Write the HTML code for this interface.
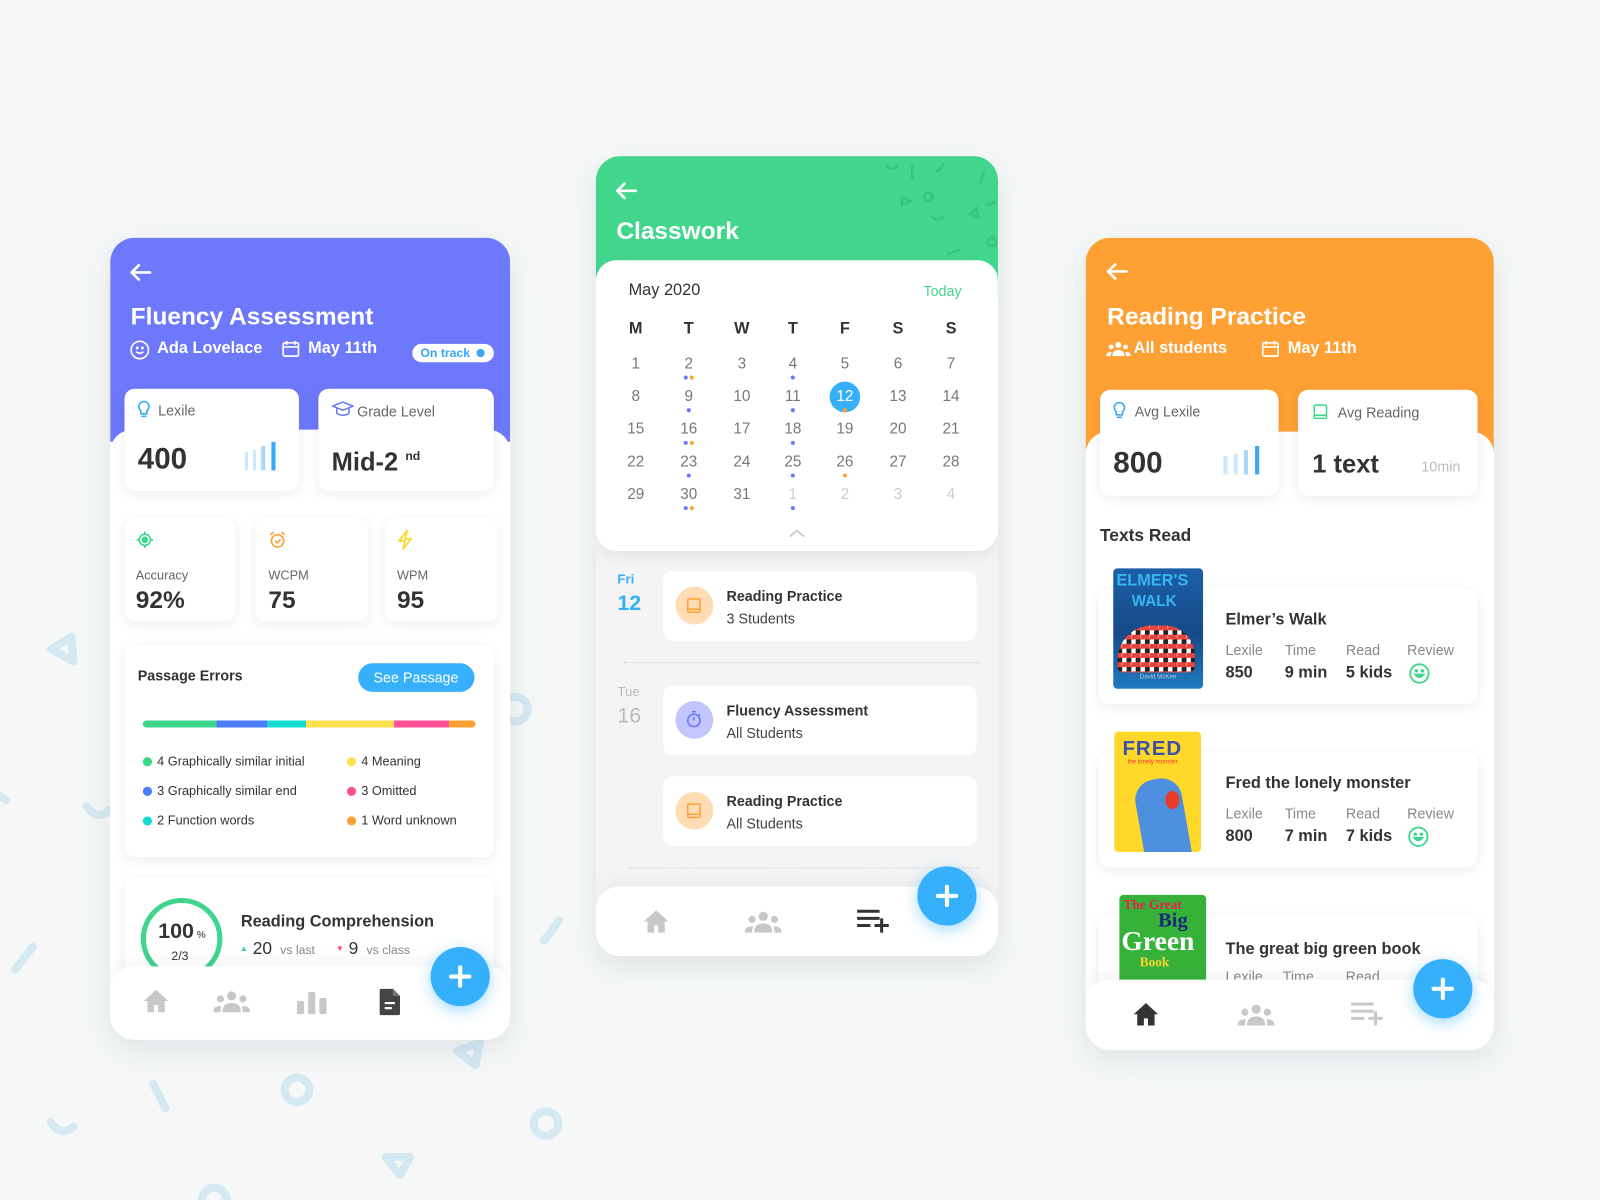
<!DOCTYPE html>
<html><head><meta charset="utf-8"><style>
*{box-sizing:border-box;margin:0;padding:0}
body{width:1600px;height:1200px;overflow:hidden;background:#f6f8f8;font-family:"Liberation Sans",sans-serif;color:#333}
#w{position:absolute;left:0;top:0;width:1568px;height:1176px;transform:scale(1.020408);transform-origin:0 0}
.a{position:absolute}
.card{position:absolute;border-radius:24px;overflow:hidden;box-shadow:0 10px 30px rgba(120,140,150,.18)}
.wc{position:absolute;background:#fff;border-radius:10px;box-shadow:0 3px 12px rgba(0,0,0,.07)}
.t{position:absolute;white-space:nowrap}
.nav{position:absolute;left:0;right:0;bottom:0;background:#fff;border-radius:22px 22px 0 0;box-shadow:0 -6px 16px rgba(0,0,0,.04)}
.fab{position:absolute;width:58px;height:58px;border-radius:50%;background:#36b0fb;box-shadow:0 4px 14px rgba(54,176,251,.45)}
.fab:before,.fab:after{content:"";position:absolute;background:#fff;border-radius:2px;left:27px;top:18px;width:4px;height:22px}
.fab:after{left:18px;top:27px;width:22px;height:4px}
.lg{font-size:12.5px;color:#333}
.dot{display:inline-block;width:9px;height:9px;border-radius:50%;margin-right:5px;vertical-align:-1px}
.cal{position:absolute;font-size:15px;color:#777;text-align:center;width:30px}
.cd{position:absolute;width:4px;height:4px;border-radius:50%}
.ttl{font-size:24px;font-weight:bold;color:#fff}
</style></head><body><div id="w">

<svg class="a" style="left:0;top:0" width="1568" height="1176" fill="none" stroke="#d5e9f3" stroke-width="8" stroke-linecap="round" stroke-linejoin="round">
<path d="M70 624 L50 636 L72 648 Z"/>
<line x1="15" y1="950" x2="32" y2="928"/>
<line x1="150" y1="1062" x2="162" y2="1086"/>
<circle cx="291" cy="1068" r="12"/>
<path d="M50 1100 Q60 1115 72 1104"/>
<path d="M85 790 Q95 805 107 794"/>
<circle cx="535" cy="1101" r="12"/>
<path d="M378 1134 L402 1134 L392 1152 Z"/>
<path d="M470 1022 L448 1030 L466 1044 Z"/>
<line x1="533" y1="922" x2="548" y2="902"/>
<circle cx="505" cy="695" r="12"/>
<circle cx="210" cy="1176" r="12"/>
<path d="M0 780 L6 784"/>
</svg>

<!-- LEFT CARD -->
<div class="card" style="left:108px;top:233px;width:392px;height:786px;background:#fff">
 <div class="a" style="left:0;top:0;width:392px;height:200px;background:#6d78fb"></div>
 <div class="a" style="left:0;top:188px;width:392px;height:600px;background:#fff;border-radius:22px 22px 0 0"></div>
 <svg class="a" style="left:18px;top:24px" width="24" height="20" fill="none" stroke="#fff" stroke-width="2.6" stroke-linecap="round" stroke-linejoin="round"><path d="M21 10H3M10 3L3 10L10 17"/></svg>
 <div class="t ttl" style="left:20px;top:64px">Fluency Assessment</div>
 <svg class="a" style="left:19px;top:100px" width="20" height="20" fill="none" stroke="#fff" stroke-width="1.6"><circle cx="10" cy="10" r="8.5"/><path d="M6.5 11.5Q10 15 13.5 11.5"/><circle cx="7.5" cy="8" r=".6" fill="#fff"/><circle cx="12.5" cy="8" r=".6" fill="#fff"/></svg>
 <div class="t" style="left:46px;top:100px;font-size:16px;color:#fff;font-weight:bold">Ada Lovelace</div>
 <svg class="a" style="left:168px;top:100px" width="18" height="18" fill="none" stroke="#fff" stroke-width="1.6"><rect x="1.5" y="3" width="15" height="13" rx="1.5"/><path d="M1.5 7h15M5 1v4M13 1v4"/></svg>
 <div class="t" style="left:194px;top:100px;font-size:16px;color:#fff;font-weight:bold">May 11th</div>
 <div class="a" style="left:296px;top:104px;width:80px;height:18px;border-radius:9px;background:#fff"><span class="t" style="left:8px;top:2px;font-size:12px;color:#36a8f5;font-weight:bold">On track</span><span class="a" style="left:63px;top:5px;width:8px;height:8px;border-radius:50%;background:#36a8f5"></span></div>

 <div class="wc" style="left:14px;top:148px;width:171px;height:100px">
  <svg class="a" style="left:12px;top:11px" width="14" height="18" fill="none" stroke="#36a8f5" stroke-width="1.6"><path d="M7 1.5a5 5 0 0 0-3 9v3h6v-3a5 5 0 0 0-3-9zM4.5 16h5"/></svg>
  <div class="t" style="left:33px;top:13px;font-size:14px;color:#666">Lexile</div>
  <div class="t" style="left:13px;top:53px;font-size:29px;font-weight:bold;color:#333">400</div>
  <div class="a" style="left:118px;top:62px;width:3px;height:18px;background:#cbe8fd"></div>
  <div class="a" style="left:126px;top:60px;width:3px;height:20px;background:#cbe8fd"></div>
  <div class="a" style="left:134px;top:56px;width:4px;height:24px;background:#a6d8fb"></div>
  <div class="a" style="left:144px;top:52px;width:4px;height:28px;background:#36a8f5"></div>
 </div>
 <div class="wc" style="left:204px;top:148px;width:172px;height:100px">
  <svg class="a" style="left:13px;top:12px" width="22" height="16" fill="none" stroke="#6d78fb" stroke-width="1.5" stroke-linejoin="round"><path d="M1 5L11 1L21 5L11 9Z M5 7v5q6 4 12 0V7"/></svg>
  <div class="t" style="left:38px;top:14px;font-size:14px;color:#666">Grade Level</div>
  <div class="t" style="left:13px;top:58px;font-size:25px;font-weight:bold;color:#333">Mid-2 <sup style="font-size:12px;vertical-align:10px">nd</sup></div>
 </div>

 <div class="wc" style="left:14px;top:275px;width:109px;height:101px">
  <svg class="a" style="left:11px;top:12px" width="18" height="18" fill="none" stroke="#3ed58c" stroke-width="1.6"><circle cx="9" cy="9" r="5.5"/><circle cx="9" cy="9" r="2.5" fill="#3ed58c"/><path d="M9 1v2.5M9 14.5V17M1 9h2.5M14.5 9H17"/></svg>
  <div class="t" style="left:11px;top:49px;font-size:12.5px;color:#666">Accuracy</div>
  <div class="t" style="left:11px;top:67px;font-size:24px;font-weight:bold;color:#333">92%</div>
 </div>
 <div class="wc" style="left:142px;top:275px;width:111px;height:101px">
  <svg class="a" style="left:13px;top:12px" width="18" height="18" fill="none" stroke="#ffa032" stroke-width="1.6"><circle cx="9" cy="10" r="6"/><path d="M6.5 10l2 2 3.5-3.5M2 4l3-2.5M16 4l-3-2.5"/></svg>
  <div class="t" style="left:13px;top:49px;font-size:12.5px;color:#666">WCPM</div>
  <div class="t" style="left:13px;top:67px;font-size:24px;font-weight:bold;color:#333">75</div>
 </div>
 <div class="wc" style="left:269px;top:275px;width:111px;height:101px">
  <svg class="a" style="left:12px;top:11px" width="16" height="20" fill="none" stroke="#ffd633" stroke-width="1.8" stroke-linejoin="round"><path d="M10 1L2 11h6l-2 8 8-10H8z"/></svg>
  <div class="t" style="left:12px;top:49px;font-size:12.5px;color:#666">WPM</div>
  <div class="t" style="left:12px;top:67px;font-size:24px;font-weight:bold;color:#333">95</div>
 </div>

 <div class="wc" style="left:14px;top:399px;width:362px;height:208px">
  <div class="t" style="left:13px;top:22px;font-size:14px;font-weight:bold;color:#333">Passage Errors</div>
  <div class="a" style="left:229px;top:18px;width:114px;height:28px;border-radius:14px;background:#36b0fb"><span class="t" style="left:15px;top:6px;font-size:14px;color:#fff">See Passage</span></div>
  <div class="a" style="left:18px;top:74px;width:326px;height:7px;border-radius:4px;overflow:hidden;display:flex">
   <span style="width:72px;background:#3ed58c"></span><span style="width:50px;background:#4a7cfb"></span><span style="width:38px;background:#13dbcf"></span><span style="width:86px;background:#ffe04f"></span><span style="width:54px;background:#ff4f96"></span><span style="flex:1;background:#ffa032"></span>
  </div>
  <div class="t lg" style="left:18px;top:107px"><span class="dot" style="background:#3ed58c"></span>4 Graphically similar initial</div>
  <div class="t lg" style="left:18px;top:136px"><span class="dot" style="background:#4a7cfb"></span>3 Graphically similar end</div>
  <div class="t lg" style="left:18px;top:165px"><span class="dot" style="background:#13dbcf"></span>2 Function words</div>
  <div class="t lg" style="left:218px;top:107px"><span class="dot" style="background:#ffe04f"></span>4 Meaning</div>
  <div class="t lg" style="left:218px;top:136px"><span class="dot" style="background:#ff4f96"></span>3 Omitted</div>
  <div class="t lg" style="left:218px;top:165px"><span class="dot" style="background:#ffa032"></span>1 Word unknown</div>
 </div>

 <div class="wc" style="left:14px;top:627px;width:362px;height:120px">
  <div class="a" style="left:16px;top:20px;width:80px;height:80px;border-radius:50%;border:5px solid #3ed58c"></div>
  <div class="t" style="left:33px;top:41px;font-size:21px;font-weight:bold;color:#333">100<span style="font-size:10px;color:#666"> %</span></div>
  <div class="t" style="left:46px;top:70px;font-size:12px;color:#333">2/3</div>
  <div class="t" style="left:114px;top:35px;font-size:16px;font-weight:bold;color:#333">Reading Comprehension</div>
  <div class="t" style="left:113px;top:60px;font-size:17px;color:#333"><span style="font-size:8px;color:#3ed58c;vertical-align:3px">▲</span> 20 <span style="font-size:12px;color:#888">&nbsp;vs last</span></div>
  <div class="t" style="left:207px;top:60px;font-size:17px;color:#333"><span style="font-size:8px;color:#ff4f6e;vertical-align:3px">▼</span> 9 <span style="font-size:12px;color:#888">&nbsp;vs class</span></div>
 </div>

 <div class="nav" style="height:72px">
  <svg class="a" style="left:32px;top:22px" width="26" height="24" fill="#c8c8c8"><path d="M13 1L1 12h3.5v11h6.5v-7h4v7h6.5V12H25z"/></svg>
  <svg class="a" style="left:100px;top:24px" width="38" height="22" fill="#c8c8c8"><circle cx="19" cy="5" r="4.5"/><circle cx="8" cy="8" r="3.5"/><circle cx="30" cy="8" r="3.5"/><path d="M10 21q0-9 9-9t9 9z"/><path d="M1 21q0-6 6-6h2q-1 3-1 6zM37 21q0-6-6-6h-2q1 3 1 6z"/></svg>
  <svg class="a" style="left:183px;top:25px" width="30" height="22" fill="#c8c8c8"><rect x="0" y="9" width="7" height="13" rx="1.5"/><rect x="11" y="0" width="7" height="22" rx="1.5"/><rect x="22" y="6" width="7" height="16" rx="1.5"/></svg>
  <svg class="a" style="left:264px;top:22px" width="20" height="26"><path d="M2 0h11l7 7v17a2 2 0 0 1-2 2H2a2 2 0 0 1-2-2V2a2 2 0 0 1 2-2z" fill="#444"/><path d="M13 0v7h7" fill="#777"/><path d="M5 14h10M5 19h7" stroke="#fff" stroke-width="2.2"/></svg>
 </div>
</div>
<div class="fab" style="left:422px;top:928px"></div>

<!-- MIDDLE CARD -->
<div class="card" style="left:584px;top:153px;width:394px;height:784px;background:#f4f4f4">
 <div class="a" style="left:0;top:0;width:394px;height:140px;background:#42d68c"></div>
 <svg class="a" style="left:270px;top:0" width="124" height="100" fill="none" stroke="#37c47d" stroke-width="2.5" stroke-linecap="round"><path d="M15 10q5 5 10 0M40 10v12M70 8q-2 6-6 6M110 15l-3 12M56 36a4 4 0 1 0 .1 0M30 40l8 4-8 4zM60 60q5 4 10 0M105 60l-8-3 6-6zM118 80a4 4 0 1 0 .1 0M85 92l-10 4M120 45q-3 4-6 2"/></svg>
 <svg class="a" style="left:18px;top:24px" width="24" height="20" fill="none" stroke="#fff" stroke-width="2.6" stroke-linecap="round" stroke-linejoin="round"><path d="M21 10H3M10 3L3 10L10 17"/></svg>
 <div class="t ttl" style="left:20px;top:60px">Classwork</div>
 <div class="a" style="left:0;top:102px;width:394px;height:285px;background:#fff;border-radius:20px;box-shadow:0 6px 14px rgba(0,0,0,.06)"></div>
 <div class="t" style="left:32px;top:123px;font-size:16px;color:#333">May 2020</div>
 <div class="t" style="left:321px;top:124px;font-size:14px;color:#42d68c">Today</div>
 <div id="cal"></div>
 <svg class="a" style="left:189px;top:365px" width="16" height="10" fill="none" stroke="#ccc" stroke-width="1.8"><path d="M1 8l7-6 7 6"/></svg>

 <div class="t" style="left:21px;top:407px;font-size:13px;font-weight:bold;color:#36b0fb">Fri</div>
 <div class="t" style="left:21px;top:427px;font-size:21px;font-weight:bold;color:#36b0fb">12</div>
 <div class="a" style="left:66px;top:407px;width:307px;height:68px;background:#fff;border-radius:9px">
  <div class="a" style="left:12px;top:15px;width:37px;height:37px;border-radius:50%;background:#ffdcb3"></div>
  <svg class="a" style="left:23px;top:26px" width="14" height="15" fill="none" stroke="#ffa032" stroke-width="1.5"><rect x="1" y="1" width="12" height="13" rx="1"/><path d="M1 11h12"/></svg>
  <div class="t" style="left:62px;top:16px;font-size:14px;font-weight:bold;color:#333">Reading Practice</div>
  <div class="t" style="left:62px;top:38px;font-size:14px;color:#444">3 Students</div>
 </div>
 <div class="a" style="left:27px;top:496px;width:350px;border-top:1px dotted #ccc"></div>
 <div class="t" style="left:21px;top:517px;font-size:13px;color:#bbb">Tue</div>
 <div class="t" style="left:21px;top:537px;font-size:21px;color:#bbb">16</div>
 <div class="a" style="left:66px;top:519px;width:307px;height:68px;background:#fff;border-radius:9px">
  <div class="a" style="left:12px;top:15px;width:37px;height:37px;border-radius:50%;background:#c3c6fd"></div>
  <svg class="a" style="left:22px;top:24px" width="17" height="18" fill="none" stroke="#6d78fb" stroke-width="1.6"><circle cx="8" cy="10" r="6"/><path d="M8 10V7M6 1.5h4M14 4l-1.5 1.5"/></svg>
  <div class="t" style="left:62px;top:16px;font-size:14px;font-weight:bold;color:#333">Fluency Assessment</div>
  <div class="t" style="left:62px;top:38px;font-size:14px;color:#444">All Students</div>
 </div>
 <div class="a" style="left:66px;top:608px;width:307px;height:68px;background:#fff;border-radius:9px">
  <div class="a" style="left:12px;top:15px;width:37px;height:37px;border-radius:50%;background:#ffdcb3"></div>
  <svg class="a" style="left:23px;top:26px" width="14" height="15" fill="none" stroke="#ffa032" stroke-width="1.5"><rect x="1" y="1" width="12" height="13" rx="1"/><path d="M1 11h12"/></svg>
  <div class="t" style="left:62px;top:16px;font-size:14px;font-weight:bold;color:#333">Reading Practice</div>
  <div class="t" style="left:62px;top:38px;font-size:14px;color:#444">All Students</div>
 </div>
 <div class="a" style="left:32px;top:697px;width:345px;border-top:1px dotted #ccc"></div>
 <div class="nav" style="height:68px">
  <svg class="a" style="left:46px;top:22px" width="26" height="24" fill="#c8c8c8"><path d="M13 1L1 12h3.5v11h6.5v-7h4v7h6.5V12H25z"/></svg>
  <svg class="a" style="left:145px;top:24px" width="38" height="22" fill="#c8c8c8"><circle cx="19" cy="5" r="4.5"/><circle cx="8" cy="8" r="3.5"/><circle cx="30" cy="8" r="3.5"/><path d="M10 21q0-9 9-9t9 9z"/><path d="M1 21q0-6 6-6h2q-1 3-1 6zM37 21q0-6-6-6h-2q1 3 1 6z"/></svg>
  <svg class="a" style="left:255px;top:21px" width="34" height="26" fill="none" stroke="#333" stroke-width="3"><path d="M1 3h22M1 10h22M1 17h13M18 17h14M25 10v14"/></svg>
 </div>
</div>
<div class="fab" style="left:899px;top:849px"></div>

<!-- RIGHT CARD -->
<div class="card" style="left:1064px;top:233px;width:400px;height:796px;background:#fff">
 <div class="a" style="left:0;top:0;width:400px;height:210px;background:#ffa034"></div>
 <div class="a" style="left:0;top:190px;width:400px;height:620px;background:#fff;border-radius:22px 22px 0 0"></div>
 <svg class="a" style="left:19px;top:23px" width="24" height="20" fill="none" stroke="#fff" stroke-width="2.6" stroke-linecap="round" stroke-linejoin="round"><path d="M21 10H3M10 3L3 10L10 17"/></svg>
 <div class="t ttl" style="left:21px;top:64px">Reading Practice</div>
 <svg class="a" style="left:20px;top:101px" width="24" height="16" fill="#fff"><circle cx="12" cy="4" r="3"/><circle cx="5" cy="6" r="2.3"/><circle cx="19" cy="6" r="2.3"/><path d="M6 15q0-6 6-6t6 6z"/><path d="M0 15q0-4 4-4h1.5q-1 2-1 4zM24 15q0-4-4-4h-1.5q1 2 1 4z"/></svg>
 <div class="t" style="left:47px;top:100px;font-size:16px;color:#fff;font-weight:bold">All students</div>
 <svg class="a" style="left:172px;top:100px" width="18" height="18" fill="none" stroke="#fff" stroke-width="1.6"><rect x="1.5" y="3" width="15" height="13" rx="1.5"/><path d="M1.5 7h15M5 1v4M13 1v4"/></svg>
 <div class="t" style="left:198px;top:100px;font-size:16px;color:#fff;font-weight:bold">May 11th</div>

 <div class="wc" style="left:14px;top:149px;width:175px;height:104px">
  <svg class="a" style="left:12px;top:11px" width="14" height="18" fill="none" stroke="#36a8f5" stroke-width="1.6"><path d="M7 1.5a5 5 0 0 0-3 9v3h6v-3a5 5 0 0 0-3-9zM4.5 16h5"/></svg>
  <div class="t" style="left:34px;top:13px;font-size:14px;color:#666">Avg Lexile</div>
  <div class="t" style="left:13px;top:56px;font-size:29px;font-weight:bold;color:#333">800</div>
  <div class="a" style="left:121px;top:65px;width:4px;height:18px;background:#cbe8fd"></div>
  <div class="a" style="left:131px;top:63px;width:4px;height:20px;background:#cbe8fd"></div>
  <div class="a" style="left:141px;top:59px;width:4px;height:24px;background:#a6d8fb"></div>
  <div class="a" style="left:152px;top:55px;width:4px;height:28px;background:#36a8f5"></div>
 </div>
 <div class="wc" style="left:208px;top:149px;width:176px;height:104px">
  <svg class="a" style="left:15px;top:14px" width="14" height="15" fill="none" stroke="#3ed58c" stroke-width="1.5"><rect x="1" y="1" width="12" height="13" rx="1"/><path d="M1 11h12"/></svg>
  <div class="t" style="left:39px;top:14px;font-size:14px;color:#666">Avg Reading</div>
  <div class="t" style="left:14px;top:59px;font-size:25px;font-weight:bold;color:#333">1 text</div>
  <div class="t" style="left:121px;top:67px;font-size:14px;color:#bbb">10min</div>
 </div>
 <div class="t" style="left:14px;top:282px;font-size:17px;font-weight:bold;color:#333">Texts Read</div>

 <div class="wc" style="left:13px;top:344px;width:371px;height:113px"></div>
 <div class="a" style="left:27px;top:324px;width:88px;height:118px;border-radius:4px;background:linear-gradient(#1d5fa6,#164a88 55%,#1f7bbf);overflow:hidden">
  <div class="t" style="left:3px;top:4px;font-size:16px;font-weight:bold;color:#34b6f0">ELMER'S</div>
  <div class="t" style="left:18px;top:24px;font-size:15px;font-weight:bold;color:#34b6f0">WALK</div>
  <div class="a" style="left:4px;top:56px;width:76px;height:46px;border-radius:34px 30px 6px 6px;background:repeating-conic-gradient(#e8433d 0 25%,#fff 0 50%,#222 0 75%,#3ea34a 0) 0 0/9px 9px"></div>
  <div class="t" style="left:26px;top:104px;font-size:6px;color:#bcd">David McKee</div>
 </div>
 <div class="t" style="left:137px;top:366px;font-size:16px;font-weight:bold;color:#333">Elmer’s Walk</div>
 <div class="t" style="left:137px;top:396px;font-size:14px;color:#888">Lexile</div><div class="t" style="left:137px;top:418px;font-size:16px;font-weight:bold;color:#333">850</div>
 <div class="t" style="left:195px;top:396px;font-size:14px;color:#888">Time</div><div class="t" style="left:195px;top:418px;font-size:16px;font-weight:bold;color:#333">9 min</div>
 <div class="t" style="left:255px;top:396px;font-size:14px;color:#888">Read</div><div class="t" style="left:255px;top:418px;font-size:16px;font-weight:bold;color:#333">5 kids</div>
 <div class="t" style="left:315px;top:396px;font-size:14px;color:#888">Review</div>
 <svg class="a" style="left:316px;top:416px" width="22" height="22" fill="none" stroke="#3ed58c" stroke-width="1.8"><circle cx="11" cy="11" r="9"/><path d="M7 12q4 5 8 0z" fill="#3ed58c"/><circle cx="8" cy="8.5" r=".8" fill="#3ed58c"/><circle cx="14" cy="8.5" r=".8" fill="#3ed58c"/></svg>

 <div class="wc" style="left:13px;top:504px;width:371px;height:113px"></div>
 <div class="a" style="left:28px;top:484px;width:85px;height:118px;border-radius:4px;background:#ffd82a;overflow:hidden">
  <div class="t" style="left:8px;top:6px;font-size:20px;font-weight:bold;color:#3d50a8;letter-spacing:1px">FRED</div>
  <div class="t" style="left:13px;top:27px;font-size:6px;color:#e33">the lonely monster</div>
  <div class="a" style="left:24px;top:46px;width:46px;height:80px;border-radius:20px 20px 0 0;background:#4e8fe0;transform:rotate(-10deg)"></div>
  <div class="a" style="left:50px;top:58px;width:14px;height:18px;border-radius:50%;background:#e63c2a"></div>
 </div>
 <div class="t" style="left:137px;top:526px;font-size:16px;font-weight:bold;color:#333">Fred the lonely monster</div>
 <div class="t" style="left:137px;top:556px;font-size:14px;color:#888">Lexile</div><div class="t" style="left:137px;top:578px;font-size:16px;font-weight:bold;color:#333">800</div>
 <div class="t" style="left:195px;top:556px;font-size:14px;color:#888">Time</div><div class="t" style="left:195px;top:578px;font-size:16px;font-weight:bold;color:#333">7 min</div>
 <div class="t" style="left:255px;top:556px;font-size:14px;color:#888">Read</div><div class="t" style="left:255px;top:578px;font-size:16px;font-weight:bold;color:#333">7 kids</div>
 <div class="t" style="left:315px;top:556px;font-size:14px;color:#888">Review</div>
 <svg class="a" style="left:315px;top:576px" width="22" height="22" fill="none" stroke="#3ed58c" stroke-width="1.8"><circle cx="11" cy="11" r="9"/><path d="M7 12q4 5 8 0z" fill="#3ed58c"/><circle cx="8" cy="8.5" r=".8" fill="#3ed58c"/><circle cx="14" cy="8.5" r=".8" fill="#3ed58c"/></svg>

 <div class="wc" style="left:13px;top:664px;width:371px;height:113px"></div>
 <div class="a" style="left:33px;top:644px;width:85px;height:118px;border-radius:4px;background:#36b23a;overflow:hidden">
  <div class="t" style="left:4px;top:2px;font-size:13px;font-weight:bold;color:#e8204a;font-family:'Liberation Serif',serif">The Great</div>
  <div class="t" style="left:38px;top:14px;font-size:20px;font-weight:bold;color:#1b2a7a;font-family:'Liberation Serif',serif">Big</div>
  <div class="t" style="left:2px;top:30px;font-size:27px;font-weight:bold;color:#fff;font-family:'Liberation Serif',serif">Green</div>
  <div class="t" style="left:20px;top:58px;font-size:13px;font-weight:bold;color:#f5d630;font-family:'Liberation Serif',serif">Book</div>
 </div>
 <div class="t" style="left:137px;top:689px;font-size:16px;font-weight:bold;color:#333">The great big green book</div>
 <div class="t" style="left:137px;top:716px;font-size:14px;color:#888">Lexile&nbsp;&nbsp;&nbsp;&nbsp;&nbsp;Time&nbsp;&nbsp;&nbsp;&nbsp;&nbsp;&nbsp;&nbsp;&nbsp;Read</div>

 <div class="nav" style="height:69px">
  <svg class="a" style="left:46px;top:22px" width="26" height="24" fill="#333"><path d="M13 1L1 12h3.5v11h6.5v-7h4v7h6.5V12H25z"/></svg>
  <svg class="a" style="left:148px;top:24px" width="38" height="22" fill="#c8c8c8"><circle cx="19" cy="5" r="4.5"/><circle cx="8" cy="8" r="3.5"/><circle cx="30" cy="8" r="3.5"/><path d="M10 21q0-9 9-9t9 9z"/><path d="M1 21q0-6 6-6h2q-1 3-1 6zM37 21q0-6-6-6h-2q1 3 1 6z"/></svg>
  <svg class="a" style="left:259px;top:21px" width="34" height="26" fill="none" stroke="#c8c8c8" stroke-width="3"><path d="M1 3h22M1 10h22M1 17h13M18 17h14M25 10v14"/></svg>
 </div>
</div>
<div class="fab" style="left:1385px;top:940px"></div>

<script>
(function(){
var c=document.getElementById('cal');var xs=[39,91,143,193,244,296,348];var h='';
'MTWTFSS'.split('').forEach(function(d,i){h+='<div class="cal" style="left:'+(xs[i]-15)+'px;top:161px;font-size:16px;font-weight:bold;color:#333">'+d+'</div>';});
var ys=[195,227,259,291,323];
var dots={2:['#6d78fb','#ffa032'],4:['#6d78fb'],9:['#6d78fb'],11:['#6d78fb'],12:['#ffa032'],16:['#6d78fb','#ffa032'],18:['#6d78fb'],23:['#6d78fb'],25:['#6d78fb'],26:['#ffa032'],30:['#6d78fb','#ffa032']};
for(var k=0;k<35;k++){var r=Math.floor(k/7),col=k%7,n=k+1,out=false;if(n>31){n-=31;out=true;}
var x=xs[col],y=ys[r];
if(!out&&n==12){h+='<div class="a" style="left:'+(x-15)+'px;top:'+(y-6)+'px;width:30px;height:30px;border-radius:50%;background:#36b0fb"></div>';}
h+='<div class="cal" style="left:'+(x-15)+'px;top:'+y+'px;color:'+(out?'#ccc':(n==12?'#fff':'#777'))+'">'+n+'</div>';
var d=out?(n==1?['#6d78fb']:null):dots[n];
if(d){d.forEach(function(cc,j){var dx=x-(d.length*6-2)/2+j*6;h+='<div class="cd" style="left:'+dx+'px;top:'+(y+20)+'px;background:'+cc+'"></div>';});}
}
c.innerHTML=h;})();
</script>
</div></body></html>
